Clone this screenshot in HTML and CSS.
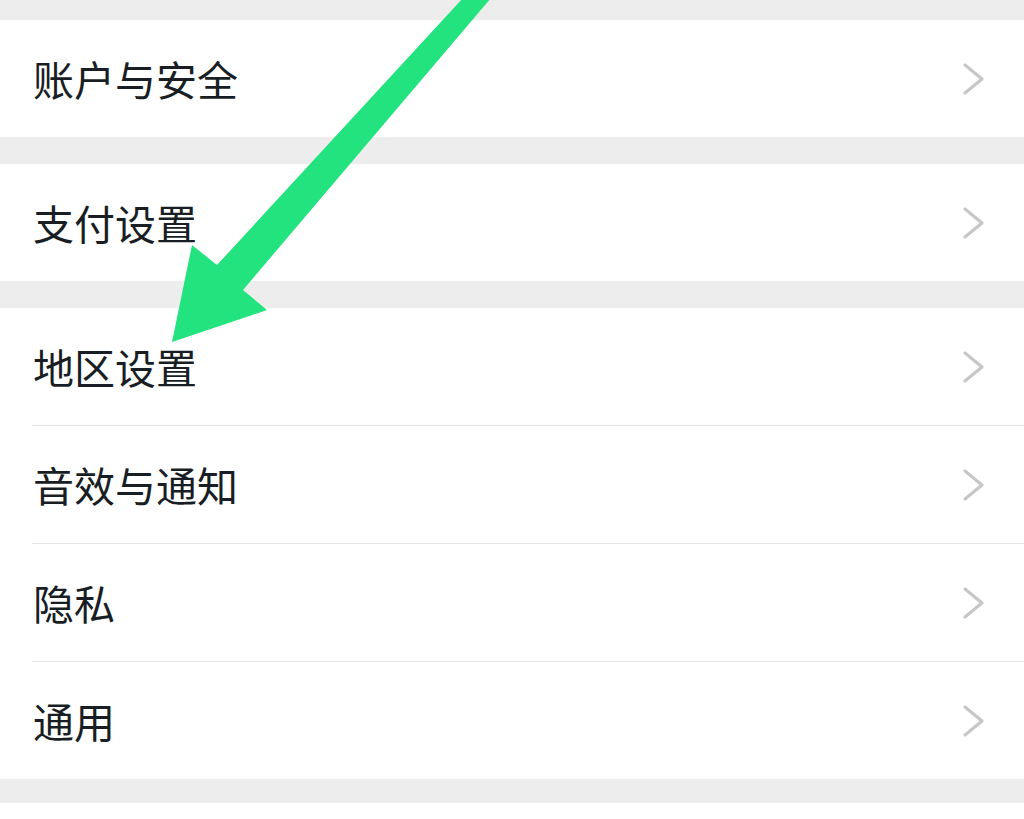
FILE: index.html
```html
<!DOCTYPE html>
<html lang="zh-CN">
<head>
<meta charset="utf-8">
<title>设置</title>
<link rel="stylesheet" href="styles.css">
</head>
<body>
<div class="page">
  <div class="group">
    <div class="row"><span class="label">账户与安全</span><svg class="chev" viewBox="0 0 24 32"><polyline points="2,2 19,16 2,30"/></svg></div>
  </div>
  <div class="group">
    <div class="row"><span class="label">支付设置</span><svg class="chev" viewBox="0 0 24 32"><polyline points="2,2 19,16 2,30"/></svg></div>
  </div>
  <div class="group">
    <div class="row"><span class="label">地区设置</span><svg class="chev" viewBox="0 0 24 32"><polyline points="2,2 19,16 2,30"/></svg></div>
    <div class="row"><span class="label">音效与通知</span><svg class="chev" viewBox="0 0 24 32"><polyline points="2,2 19,16 2,30"/></svg></div>
    <div class="row"><span class="label">隐私</span><svg class="chev" viewBox="0 0 24 32"><polyline points="2,2 19,16 2,30"/></svg></div>
    <div class="row"><span class="label">通用</span><svg class="chev" viewBox="0 0 24 32"><polyline points="2,2 19,16 2,30"/></svg></div>
  </div>
  <div class="tail"></div>
  <svg class="arrow" viewBox="0 0 1024 819" width="1024" height="819">
    <polygon points="463,-2 491,-2 243,290 267,310 172,342 192,245 217,265"/>
  </svg>
</div>
</body>
</html>
```

FILE: styles.css
```css
html, body {
  margin: 0;
  padding: 0;
}
body {
  background: #ededed;
  font-family: "Noto Sans CJK SC", "Noto Sans", sans-serif;
  overflow: hidden;
}
.page {
  position: relative;
  width: 1024px;
  height: 819px;
  padding-top: 20px;
  box-sizing: border-box;
}
.group {
  background: #ffffff;
  margin-bottom: 27px;
}
.group:nth-of-type(3) {
  margin-bottom: 24px;
}
.row {
  height: 117px;
  margin-left: 32px;
  padding-left: 1px;
  padding-right: 37px;
  display: flex;
  align-items: center;
  justify-content: space-between;
}
.row + .row {
  border-top: 1px solid #e3e3e3;
}
.label {
  font-size: 41px;
  color: #181e24;
  line-height: 1;
  letter-spacing: 0;
}
.chev {
  width: 24px;
  height: 32px;
  flex: none;
}
.chev polyline {
  fill: none;
  stroke: #c6c6c6;
  stroke-width: 3;
  stroke-linecap: round;
  stroke-linejoin: round;
}
.tail {
  background: #ffffff;
  height: 40px;
}
.arrow {
  position: absolute;
  left: 0;
  top: 0;
  pointer-events: none;
}
.arrow polygon {
  fill: #23e37f;
}
```
